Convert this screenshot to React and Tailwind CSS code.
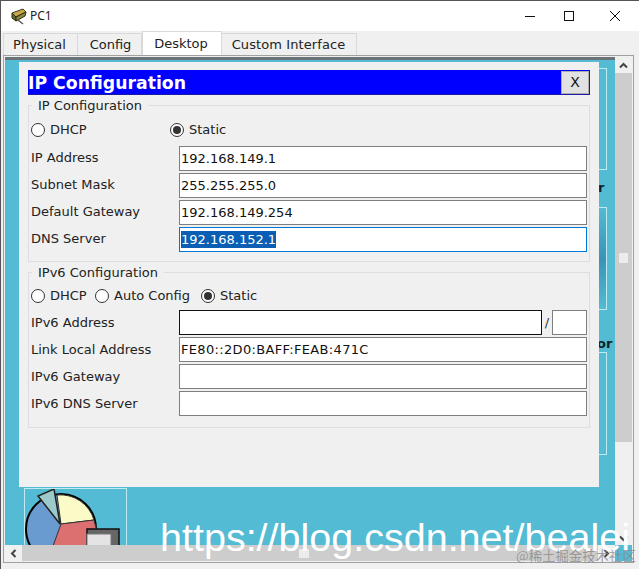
import React from "react";

const font = { fontFamily: '"DejaVu Sans", sans-serif' };

function Radio({ on }) {
  return (
    <span className="w-[14px] h-[14px] rounded-full border border-[#333] bg-white flex items-center justify-center shrink-0">
      {on && <span className="w-[8px] h-[8px] rounded-full bg-[#333]" />}
    </span>
  );
}

function RadioLabel({ on, label, className = "" }) {
  return (
    <div className={`flex items-center gap-[5px] text-[13px] text-[#222] ${className}`}>
      <Radio on={on} />
      <span>{label}</span>
    </div>
  );
}

function Row({ label, value, selected, focus, wide, labelClass = "-mt-[1px]", children }) {
  return (
    <div className="flex items-center h-[25px] pl-[2px] pr-[2px]">
      <span className={`w-[148px] shrink-0 text-[13px] text-[#222] ${labelClass}`}>{label}</span>
      {children || (
        <div
          className={`flex-1 h-[25px] bg-white border flex items-center pl-[1px] text-[13px] text-[#111] ${
            focus ? "border-[#0078d7]" : "border-[#7f7f7f]"
          } ${wide ? "tracking-[0.33px]" : ""}`}
        >
          {selected ? <span className="bg-[#0a5fb4] text-white leading-[17px]">{value}</span> : value}
        </div>
      )}
    </div>
  );
}

function Group({ title, children, className = "" }) {
  return (
    <div className={`relative border border-[#dcdfe0] ${className}`}>
      <span className="absolute -top-[9px] left-[3px] px-[6px] bg-[#f0f0f0] text-[13px] leading-[17px] text-[#222]">
        {title}
      </span>
      {children}
    </div>
  );
}

function PieIcon() {
  return (
    <svg width="102" height="68" viewBox="0 0 102 68" className="absolute left-0 top-0">
      <circle cx="36" cy="40" r="35" fill="#6a9bd0" stroke="#000" strokeWidth="2" />
      <path d="M36 35 L32 6 A35 35 0 0 1 69 31 Z" fill="#fbfbc8" stroke="#333" strokeWidth="1" />
      <path d="M36 35 L69 31 A35 35 0 0 1 62 68 L24 68 Z" fill="#dc6f70" stroke="#333" strokeWidth="1" />
      <path d="M35 35 L13 7 L29 0 Z" fill="#9ccaca" stroke="#222" strokeWidth="1.5" />
      <rect x="62" y="40" width="32" height="28" fill="#666" stroke="#111" strokeWidth="1.5" />
      <rect x="62" y="45" width="24" height="23" fill="#e4e4e4" stroke="#777" strokeWidth="1" />
    </svg>
  );
}

function PcIcon() {
  return (
    <svg width="17" height="17" viewBox="0 0 17 17">
      <path d="M2 5 L13 1 L16 4 L6 9 Z" fill="#c9a64a" stroke="#3c3a1e" strokeWidth="1" />
      <path d="M2 5 L6 9 L6 13 L2 10 Z" fill="#5f6b33" stroke="#2c2c14" strokeWidth="1" />
      <path d="M6 9 L16 4 L15 8 L6 13 Z" fill="#8c8a3c" stroke="#2c2c14" strokeWidth="1" />
      <path d="M8 12 L13 16" stroke="#555" strokeWidth="1.5" />
    </svg>
  );
}

export default function App() {
  return (
    <div style={font} className="relative w-[639px] h-[569px] bg-[#f0f0f0] overflow-hidden flex flex-col border-l border-[#555]">
      <div className="h-[31px] bg-white border-t border-[#555] flex items-center shrink-0">
        <span className="ml-[9px] mr-[3px] flex">
          <PcIcon />
        </span>
        <span style={{ fontFamily: '"Noto Sans", sans-serif' }} className="text-[12px] text-[#222]">PC1</span>
        <div className="ml-auto flex items-center text-[#111] pr-[18px]">
          <svg width="12" height="12" viewBox="0 0 12 12" className="mr-[27px]">
            <path d="M1 6.5 H11" stroke="#111" strokeWidth="1" />
          </svg>
          <svg width="12" height="12" viewBox="0 0 12 12" className="mr-[34px]">
            <rect x="1.5" y="1.5" width="9" height="9" fill="none" stroke="#111" strokeWidth="1" />
          </svg>
          <svg width="12" height="12" viewBox="0 0 12 12">
            <path d="M1 1 L11 11 M11 1 L1 11" stroke="#111" strokeWidth="1" />
          </svg>
        </div>
      </div>

      <div className="h-[24px] pl-[2px] flex items-end shrink-0 text-[13px] text-[#222]">
        <div className="h-[22px] w-[75px] pr-[2px] border border-b-0 border-[#d9d9d9] flex items-center justify-center">Physical</div>
        <div className="h-[22px] w-[64px] pl-[2px] border border-b-0 border-l-0 border-[#d9d9d9] flex items-center justify-center">Config</div>
        <div className="h-[24px] w-[80px] pr-[2px] bg-white border border-b-0 border-[#d9d9d9] flex items-center justify-center -mt-[2px]">Desktop</div>
        <div className="h-[22px] w-[135px] pr-[1px] border border-b-0 border-l-0 border-[#d9d9d9] flex items-center justify-center tracking-[0.1px]">Custom Interface</div>
      </div>

      <div className="flex-1 min-h-0 ml-[2px] mr-[5px] mb-[6px] border border-[#a0a0a0] p-[1px] flex flex-col">
        <div className="flex-1 min-h-0 flex">
          <div className="relative flex-1 bg-[#53bbd3] border-t-[3px] border-[#6b7378] overflow-hidden">
            <div className="absolute left-[466px] top-[8px] w-[136px] h-[102px] border border-[#bfeaf2]" />
            <div className="absolute left-[466px] top-[147px] w-[136px] h-[103px] border border-[#bfeaf2] bg-gradient-to-b from-[#53bbd3] via-[#3a93b5] to-[#53bbd3]" />
            <div className="absolute left-[466px] top-[292px] w-[136px] h-[103px] border border-[#bfeaf2]" />
            <span className="absolute left-[593px] top-[118px] text-[13px] font-bold text-[#122]">r</span>
            <span className="absolute left-[592px] top-[274px] text-[13px] font-bold text-[#122]">or</span>
            <div className="absolute left-[19px] top-[428px] w-[103px] h-[72px] border border-[#bfeaf2] overflow-hidden">
              <PieIcon />
            </div>

            <div className="absolute left-[14px] top-[2px] w-[580px] h-[425px] bg-[#f0f0f0] pl-[9px] pr-[9px] pt-[8px]">
              <div className="h-[25px] bg-[#0000ff] flex items-center justify-between border border-[#0000ff] border-r-[#1a1aa8] border-b-[#1a1aa8]">
                <span className="text-[17.3px] font-bold text-white leading-none -ml-[1px] mt-[3px]">IP Configuration</span>
                <span className="w-[28px] h-[23px] bg-[#e1e1e1] border border-[#adadad] flex items-center justify-center text-[14px] text-[#111]">X</span>
              </div>

              <Group title="IP Configuration" className="mt-[10px] h-[157px]">
                <div className="flex items-center h-[24px] mt-[12px] pl-[2px] mb-[4px]">
                  <RadioLabel on={false} label="DHCP" className="w-[139px]" />
                  <RadioLabel on label="Static" />
                </div>
                <div className="flex flex-col gap-[2px]">
                  <Row label="IP Address" value="192.168.149.1" />
                  <Row label="Subnet Mask" value="255.255.255.0" />
                  <Row label="Default Gateway" value="192.168.149.254" />
                  <Row label="DNS Server" value="192.168.152.1" selected focus />
                </div>
              </Group>

              <Group title="IPv6 Configuration" className="mt-[10px] h-[156px]">
                <div className="flex items-center h-[24px] mt-[11px] pl-[2px] mb-[2px]">
                  <RadioLabel on={false} label="DHCP" className="w-[64px]" />
                  <RadioLabel on={false} label="Auto Config" className="w-[106px]" />
                  <RadioLabel on label="Static" />
                </div>
                <div className="flex flex-col gap-[2px]">
                  <Row label="IPv6 Address" labelClass="mt-[1px]">
                    <div className="flex-1 h-[25px] bg-white border border-[#111]" />
                    <span className="w-[10px] text-center text-[13px] text-[#333]">/</span>
                    <div className="w-[35px] h-[25px] bg-white border border-[#7f7f7f]" />
                  </Row>
                  <Row label="Link Local Address" labelClass="mt-[1px]" value="FE80::2D0:BAFF:FEAB:471C" wide />
                  <Row label="IPv6 Gateway" labelClass="mt-[1px]" value="" />
                  <Row label="IPv6 DNS Server" labelClass="mt-[1px]" value="" />
                </div>
              </Group>
            </div>
          </div>

          <div className="w-[17px] shrink-0 flex flex-col items-center bg-[#f0f0f0]">
            <div className="h-[16px] w-full flex items-center justify-center">
              <svg width="9" height="7" viewBox="0 0 9 7"><path d="M1 5.5 L4.5 2 L8 5.5" fill="none" stroke="#444" strokeWidth="2" /></svg>
            </div>
            <div className="h-[369px] w-full bg-[#cdcdcd] flex items-center justify-center">
              <span className="w-[9px] h-[10px] bg-[#ececec]" />
            </div>
            <div className="mt-auto h-[14px] w-full flex items-center justify-center">
              <svg width="9" height="7" viewBox="0 0 9 7"><path d="M1 1.5 L4.5 5 L8 1.5" fill="none" stroke="#444" strokeWidth="2" /></svg>
            </div>
          </div>
        </div>

        <div className="h-[16px] shrink-0 flex items-center bg-[#f0f0f0]">
          <div className="w-[17px] flex justify-center">
            <svg width="7" height="9" viewBox="0 0 7 9"><path d="M5.5 1 L2 4.5 L5.5 8" fill="none" stroke="#444" strokeWidth="2" /></svg>
          </div>
          <div className="flex-1 h-full bg-[#cdcdcd] flex items-center justify-center">
            <span className="w-[10px] h-[9px] bg-[#ececec] ml-[-12px]" />
          </div>
          <div className="w-[17px] flex justify-center">
            <svg width="7" height="9" viewBox="0 0 7 9"><path d="M1.5 1 L5 4.5 L1.5 8" fill="none" stroke="#444" strokeWidth="2" /></svg>
          </div>
          <div className="w-[17px] h-full bg-[#53bbd3]" />
        </div>
      </div>

      <span
        style={{ fontFamily: '"Liberation Sans", sans-serif' }}
        className="absolute left-[159px] top-[509px] text-[39.5px] leading-[56px] text-white whitespace-nowrap"
      >
        https://blog.csdn.net/bealei
      </span>
      <span
        style={{ fontFamily: '"Noto Sans CJK SC", sans-serif' }}
        className="absolute left-[515px] top-[545px] text-[13.4px] leading-[20px] text-[#8a8a8a]/80 whitespace-nowrap"
      >
        @稀土掘金技术社区
      </span>
    </div>
  );
}
